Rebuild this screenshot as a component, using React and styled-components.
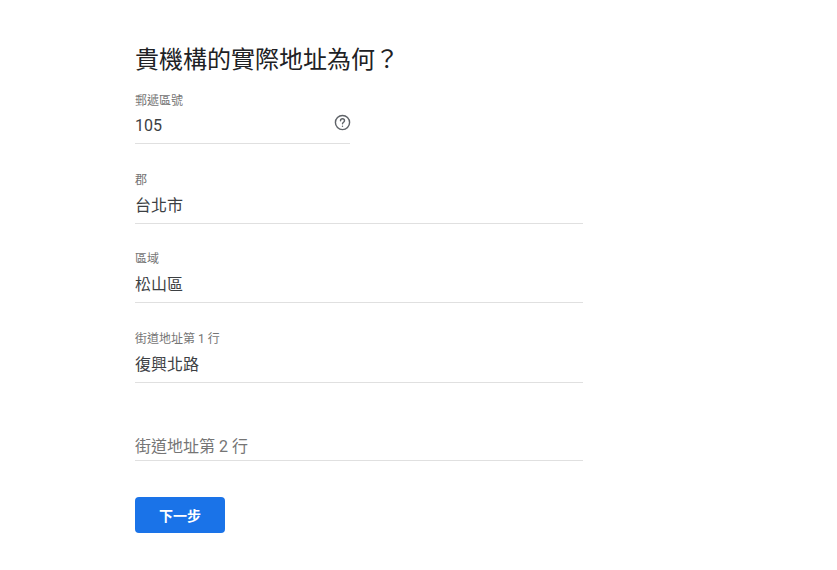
import React from 'react';
import styled, { createGlobalStyle } from 'styled-components';

const GlobalStyle = createGlobalStyle`
    html, body {
        margin: 0;
        background: #fff;
    }
    body {
        font-family: Roboto, "Noto Sans CJK TC", sans-serif;
        color: #202124;
    }
`;

const Page = styled.main`
    width: 448px;
    padding: 44px 0 37px 135px;
`;

const Title = styled.h1`
    margin: 0 0 17px;
    font-size: 24px;
    line-height: 32px;
    font-weight: 400;
    color: #202124;
`;

const Field = styled.label`
    display: block;
    position: relative;
    width: ${(p) => (p.$short ? '215px' : '448px')};
    margin-bottom: ${(p) => p.$gap ?? 28}px;
    border-bottom: 1px solid #e0e0e0;
`;

const FieldLabel = styled.span`
    display: block;
    font-size: 12px;
    line-height: 16px;
    color: #757575;
`;

const FieldInput = styled.input`
    display: block;
    width: 100%;
    height: 35px;
    margin: 0;
    padding: 0 0 3px;
    box-sizing: border-box;
    border: 0;
    outline: 0;
    background: transparent;
    font: inherit;
    font-size: 16px;
    color: #3c4043;

    &::placeholder {
        color: #757575;
        opacity: 1;
    }
`;

const ShortInput = styled(FieldInput)`
    height: 34px;
    padding-bottom: 1px;
`;

const BareInput = styled(FieldInput)`
    height: 30px;
    padding: 2px 0 0;
`;

const HelpIcon = styled.svg`
    position: absolute;
    right: -1px;
    top: 21px;
    width: 17px;
    height: 17px;
    color: #5f6368;
`;

const NextButton = styled.button`
    display: block;
    width: 90px;
    height: 36px;
    margin-top: 36px;
    padding: 0;
    border: 0;
    border-radius: 4px;
    background: #1a73e8;
    color: #fff;
    font: inherit;
    font-size: 14px;
    font-weight: 700;
`;

export default function App() {
    return (
        <Page>
            <GlobalStyle />
            <Title>貴機構的實際地址為何？</Title>

            <Field $short>
                <FieldLabel>郵遞區號</FieldLabel>
                <ShortInput defaultValue="105" />
                <HelpIcon viewBox="0 0 24 24" fill="none" stroke="currentColor" strokeWidth="2" strokeLinecap="round">
                    <circle cx="12" cy="12" r="10" />
                    <path d="M9.2 9.6a2.8 2.8 0 0 1 5.6 0c0 1.9-2.8 2.2-2.8 4.3" />
                    <path d="M12 17.2v.1" />
                </HelpIcon>
            </Field>

            <Field $gap={27}>
                <FieldLabel>郡</FieldLabel>
                <FieldInput defaultValue="台北市" />
            </Field>

            <Field>
                <FieldLabel>區域</FieldLabel>
                <FieldInput defaultValue="松山區" />
            </Field>

            <Field $gap={47}>
                <FieldLabel>街道地址第 1 行</FieldLabel>
                <FieldInput defaultValue="復興北路" />
            </Field>

            <Field $gap={0}>
                <BareInput placeholder="街道地址第 2 行" />
            </Field>

            <NextButton type="button">下一步</NextButton>
        </Page>
    );
}
